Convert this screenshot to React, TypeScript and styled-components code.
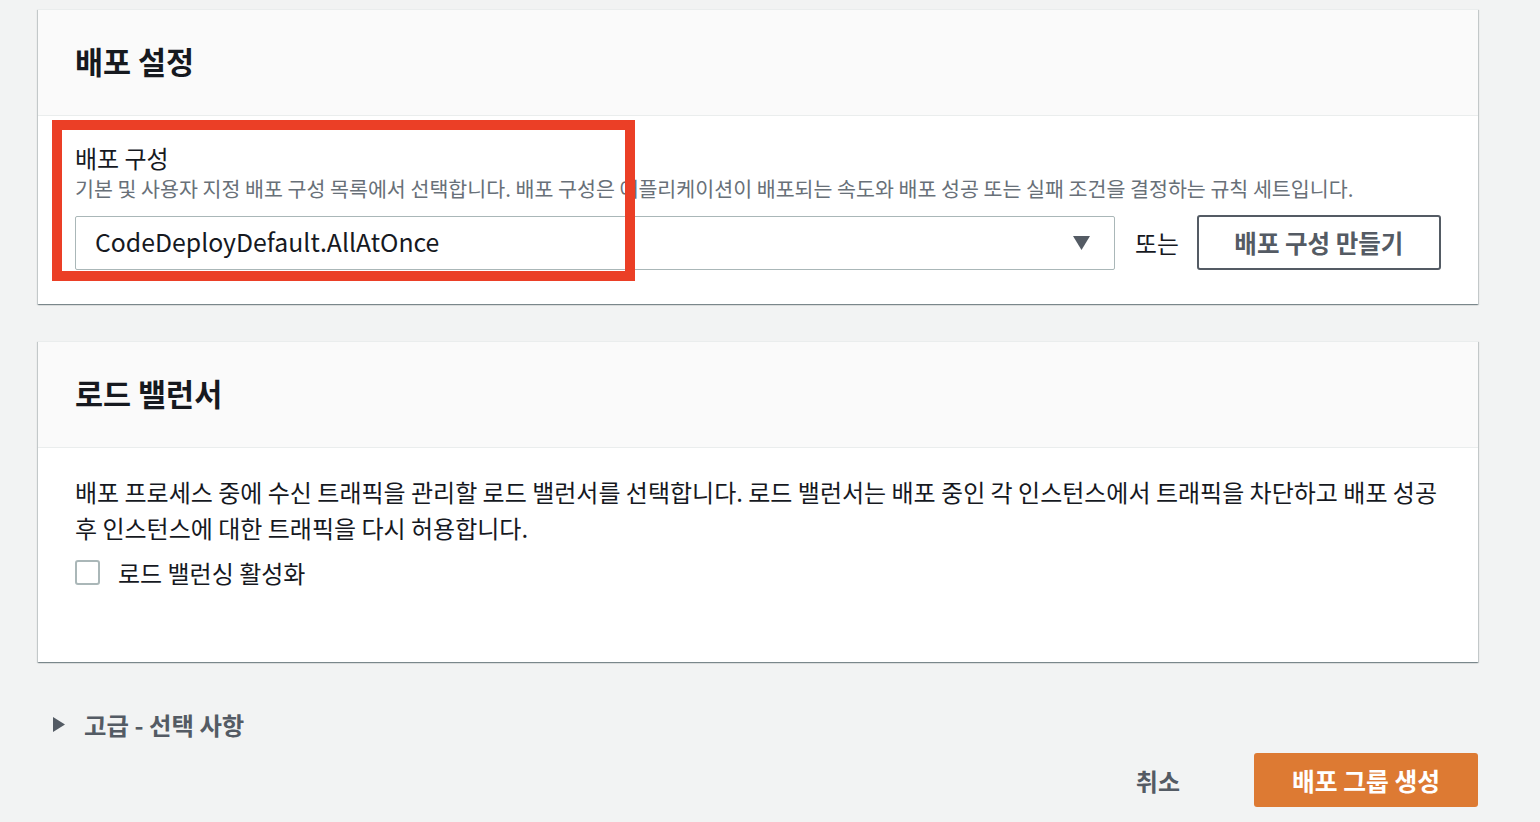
import React from "react";
import styled, { createGlobalStyle } from "styled-components";

const Global = createGlobalStyle`
  html, body { margin: 0; padding: 0; background: #f2f3f3; }
  body { font-family: "Noto Sans CJK KR", "Noto Sans", sans-serif; color: #16191f; }
  * { box-sizing: border-box; }
`;

const Page = styled.div`
  width: 1540px;
  height: 822px;
  overflow: hidden;
  padding: 9px 62px 0 38px;
  display: flex;
  flex-direction: column;
`;

const Card = styled.section<{ $gap?: number }>`
  position: relative;
  background: #fff;
  border-top: 1px solid #eaeded;
  box-shadow: 0 1px 1px 0 rgba(0, 28, 36, 0.3), 1px 1px 1px 0 rgba(0, 28, 36, 0.15),
    -1px 1px 1px 0 rgba(0, 28, 36, 0.15);
  margin-top: ${(p) => p.$gap ?? 0}px;
`;

const CardHeader = styled.header`
  height: 106px;
  background: #fafafa;
  border-bottom: 1px solid #eaeded;
  display: flex;
  align-items: center;
  padding: 0 37px 2px;
`;

const Title = styled.h2`
  margin: 0;
  font-size: 30.5px;
  font-weight: 700;
  line-height: 1;
  color: #16191f;
`;

const CardBody = styled.div<{ $pt: number; $pb: number }>`
  padding: ${(p) => p.$pt}px 37px ${(p) => p.$pb}px;
`;

const Label = styled.div`
  font-size: 24px;
  line-height: 30px;
  color: #16191f;
`;

const Description = styled.div`
  font-size: 20.6px;
  line-height: 30px;
  color: #687078;
  white-space: nowrap;
`;

const ControlRow = styled.div`
  display: flex;
  align-items: center;
  margin-top: 12px;
`;

const Select = styled.div`
  flex: 0 0 1040px;
  height: 54px;
  border: 1px solid #aab7b8;
  border-radius: 2px;
  display: flex;
  align-items: center;
  justify-content: space-between;
  padding: 0 24px 3px 19px;
  font-size: 24.8px;
  color: #16191f;
`;

const Caret = styled.svg`
  width: 17px;
  height: 14px;
  fill: #545b64;
  margin-top: 3px;
`;

const Or = styled.span`
  flex: 0 0 auto;
  white-space: nowrap;
  margin: 0 18px 0 20px;
  font-size: 23.8px;
  color: #16191f;
`;

const OutlineButton = styled.button`
  flex: 0 0 244px;
  height: 55px;
  background: #fff;
  border: 2px solid #545b64;
  border-radius: 3px;
  font-family: inherit;
  font-size: 24.5px;
  font-weight: 700;
  color: #545b64;
  padding: 0;
  white-space: nowrap;
`;

const Highlight = styled.div`
  position: absolute;
  left: 14px;
  top: 110px;
  width: 583px;
  height: 161px;
  border: 10px solid #eb3f26;
  pointer-events: none;
`;

const Paragraph = styled.p`
  margin: 0;
  font-size: 24px;
  line-height: 36px;
  color: #16191f;
`;

const CheckRow = styled.label`
  display: flex;
  align-items: center;
  gap: 18px;
  margin-top: 11px;
  height: 30px;
  font-size: 24px;
  color: #16191f;
`;

const Box = styled.span`
  width: 25px;
  height: 25px;
  border: 2px solid #aab7b8;
  border-radius: 3px;
  background: #fff;
`;

const Expander = styled.div`
  display: flex;
  align-items: center;
  gap: 18px;
  height: 30px;
  margin: 47px 0 0 14px;
  font-size: 24.4px;
  font-weight: 700;
  color: #545b64;
`;

const Tri = styled.svg`
  width: 14px;
  height: 17px;
  fill: #545b64;
`;

const Footer = styled.div`
  display: flex;
  justify-content: flex-end;
  align-items: center;
  margin-top: 14px;
`;

const LinkButton = styled.button`
  background: none;
  border: none;
  font-family: inherit;
  font-size: 24px;
  font-weight: 700;
  color: #545b64;
  padding: 0;
  margin-right: 74px;
`;

const PrimaryButton = styled.button`
  width: 224px;
  height: 54px;
  background: #dd7a33;
  border: none;
  border-radius: 3px;
  font-family: inherit;
  font-size: 24.8px;
  font-weight: 700;
  color: #fff;
  padding: 0;
`;

export default function App() {
  return (
    <>
      <Global />
      <Page>
        <Card>
          <CardHeader>
            <Title>배포 설정</Title>
          </CardHeader>
          <CardBody $pt={27} $pb={34}>
            <Label>배포 구성</Label>
            <Description>
              기본 및 사용자 지정 배포 구성 목록에서 선택합니다. 배포 구성은 애플리케이션이 배포되는 속도와 배포 성공 또는 실패 조건을 결정하는 규칙 세트입니다.
            </Description>
            <ControlRow>
              <Select>
                <span>CodeDeployDefault.AllAtOnce</span>
                <Caret viewBox="0 0 17 14">
                  <path d="M0 0 H17 L8.5 14 Z" />
                </Caret>
              </Select>
              <Or>또는</Or>
              <OutlineButton>배포 구성 만들기</OutlineButton>
            </ControlRow>
          </CardBody>
          <Highlight />
        </Card>

        <Card $gap={37}>
          <CardHeader>
            <Title>로드 밸런서</Title>
          </CardHeader>
          <CardBody $pt={26} $pb={75}>
            <Paragraph>
              배포 프로세스 중에 수신 트래픽을 관리할 로드 밸런서를 선택합니다. 로드 밸런서는 배포 중인 각 인스턴스에서 트래픽을 차단하고 배포 성공
              <br />
              후 인스턴스에 대한 트래픽을 다시 허용합니다.
            </Paragraph>
            <CheckRow>
              <Box />
              <span>로드 밸런싱 활성화</span>
            </CheckRow>
          </CardBody>
        </Card>

        <Expander>
          <Tri viewBox="0 0 14 17">
            <path d="M1 1 L13 8.5 L1 16 Z" />
          </Tri>
          <span>고급 - 선택 사항</span>
        </Expander>

        <Footer>
          <LinkButton>취소</LinkButton>
          <PrimaryButton>배포 그룹 생성</PrimaryButton>
        </Footer>
      </Page>
    </>
  );
}
